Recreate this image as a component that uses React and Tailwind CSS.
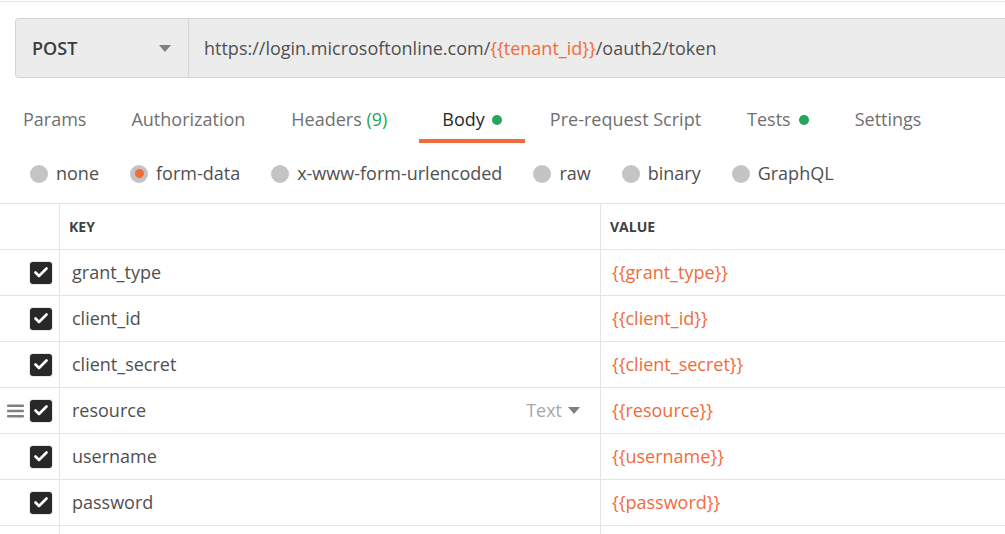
const ORANGE = 'text-[#f26b3a]'

const rows = [
  { key: 'grant_type', value: 'grant_type' },
  { key: 'client_id', value: 'client_id' },
  { key: 'client_secret', value: 'client_secret' },
  { key: 'resource', value: 'resource', hover: true },
  { key: 'username', value: 'username' },
  { key: 'password', value: 'password' },
]

function Caret({ className = '' }) {
  return (
    <svg width="12" height="7" viewBox="0 0 12 7" className={className}>
      <path d="M0 0 L12 0 L6 7 Z" fill="currentColor" />
    </svg>
  )
}

function Grip() {
  return (
    <svg width="17" height="14" viewBox="0 0 17 14" className="text-[#808080]">
      <rect x="0" y="0.5" width="17" height="2.6" rx="1" fill="currentColor" />
      <rect x="0" y="5.7" width="17" height="2.6" rx="1" fill="currentColor" />
      <rect x="0" y="10.9" width="17" height="2.6" rx="1" fill="currentColor" />
    </svg>
  )
}

function Check() {
  return (
    <div className="w-[24px] h-[24px] rounded-[4px] bg-[#e8e8e8] flex items-center justify-center">
      <div className="w-[22px] h-[22px] rounded-[3px] bg-[#282828] flex items-center justify-center">
        <svg width="14" height="11" viewBox="0 0 14 11">
          <path d="M1.5 5.5 L5 9 L12.5 1.5" fill="none" stroke="white" strokeWidth="2.6" strokeLinecap="round" strokeLinejoin="round" />
        </svg>
      </div>
    </div>
  )
}

function Radio({ label, on }) {
  return (
    <div className="flex items-center gap-[8px]">
      <div className="w-[18px] h-[18px] rounded-full bg-[#c4c4c4] flex items-center justify-center">
        {on && <div className="w-[9px] h-[9px] rounded-full bg-[#f26b3a]" />}
      </div>
      <span>{label}</span>
    </div>
  )
}

export default function App() {
  return (
    <div className="w-[1005px] h-[534px] bg-white overflow-hidden text-[#505050] text-[18px]" style={{ fontFamily: '"Open Sans", sans-serif' }}>
      <div className="h-[2px] border-b border-[#e4e4e4]" />

      {/* url bar */}
      <div className="pl-[15px] pt-[16px]">
        <div className="h-[60px] flex bg-[#ececec] border border-r-0 border-[#d4d4d4] rounded-l-[4px]">
          <div className="w-[173px] flex items-center justify-between pl-[16px] pr-[17px] border-r border-[#d4d4d4]">
            <span className="font-semibold text-[#3c3c3c]">POST</span>
            <Caret className="text-[#808080]" />
          </div>
          <div className="flex items-center pl-[15px]">
            https://login.microsoftonline.com/<span className={ORANGE}>{'{{tenant_id}}'}</span>/oauth2/token
          </div>
        </div>
      </div>

      {/* tabs */}
      <div className="flex h-[66px] pl-[23px] pt-[28px] text-[#707070]">
        <div className="mr-[45px]">Params</div>
        <div className="mr-[46px]">Authorization</div>
        <div className="mr-[32px]">Headers <span className="text-[#26a65b]">(9)</span></div>
        <div className="relative px-[23px] text-[#282828] flex items-start">
          Body<span className="inline-block w-[10px] h-[10px] rounded-full bg-[#26a65b] ml-[7px] mt-[9px]" />
          <div className="absolute left-0 right-0 top-[33px] h-[4px] bg-[#f26b3a]" />
        </div>
        <div className="ml-[25px] mr-[46px]">Pre-request Script</div>
        <div className="mr-[46px] flex items-start">
          Tests<span className="inline-block w-[10px] h-[10px] rounded-full bg-[#26a65b] ml-[8px] mt-[9px]" />
        </div>
        <div>Settings</div>
      </div>

      {/* body type radios */}
      <div className="flex items-center h-[59px] pl-[30px] gap-[31px]">
        <Radio label="none" />
        <Radio label="form-data" on />
        <Radio label="x-www-form-urlencoded" />
        <Radio label="raw" />
        <Radio label="binary" />
        <Radio label="GraphQL" />
      </div>

      {/* table */}
      <div className="border-t border-[#e4e4e4]">
        <div className="grid grid-cols-[60px_541px_1fr] h-[46px] border-b border-[#e4e4e4] text-[14px] font-bold text-[#404040]">
          <div className="border-r border-[#e4e4e4]" />
          <div className="border-r border-[#e4e4e4] flex items-center pl-[9px]">KEY</div>
          <div className="flex items-center pl-[9px]">VALUE</div>
        </div>
        {rows.map((r) => (
          <div key={r.key} className="grid grid-cols-[60px_541px_1fr] h-[46px] border-b border-[#e4e4e4]">
            <div className="border-r border-[#e4e4e4] flex items-center justify-end pr-[6px] gap-[5px]">
              {r.hover && <Grip />}
              <Check />
            </div>
            <div className="border-r border-[#e4e4e4] flex items-center justify-between pl-[12px] pr-[20px]">
              <span>{r.key}</span>
              {r.hover && (
                <span className="flex items-center gap-[6px] text-[#a8a8a8]">
                  Text <Caret className="text-[#808080]" />
                </span>
              )}
            </div>
            <div className={`flex items-center pl-[11px] ${ORANGE}`}>{`{{${r.value}}}`}</div>
          </div>
        ))}
        <div className="grid grid-cols-[60px_541px_1fr] h-[46px]">
          <div className="border-r border-[#e4e4e4]" />
          <div className="border-r border-[#e4e4e4]" />
          <div />
        </div>
      </div>
    </div>
  )
}
